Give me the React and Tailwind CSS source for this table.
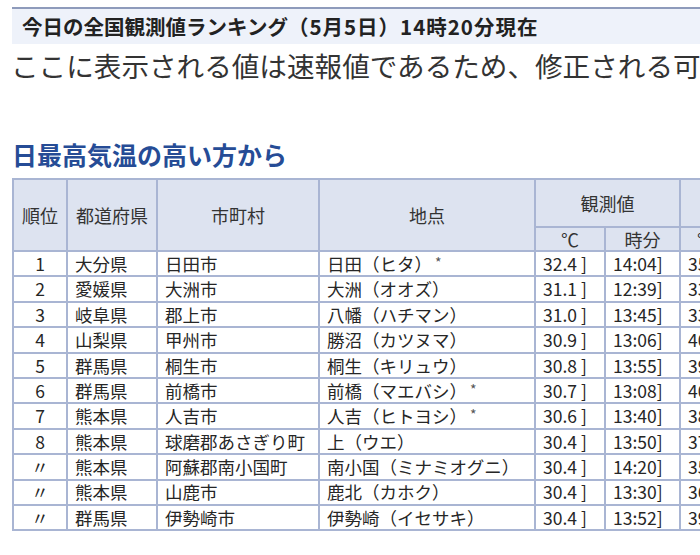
const rows = [
  { rank: '1', pref: '大分県', city: '日田市', point: '日田（ヒタ）', star: true, temp: '32.4 ]', time: '14:04]', rec: '35.2' },
  { rank: '2', pref: '愛媛県', city: '大洲市', point: '大洲（オオズ）', temp: '31.1 ]', time: '12:39]', rec: '33.6' },
  { rank: '3', pref: '岐阜県', city: '郡上市', point: '八幡（ハチマン）', temp: '31.0 ]', time: '13:45]', rec: '33.0' },
  { rank: '4', pref: '山梨県', city: '甲州市', point: '勝沼（カツヌマ）', temp: '30.9 ]', time: '13:06]', rec: '40.5' },
  { rank: '5', pref: '群馬県', city: '桐生市', point: '桐生（キリュウ）', temp: '30.8 ]', time: '13:55]', rec: '39.8' },
  { rank: '6', pref: '群馬県', city: '前橋市', point: '前橋（マエバシ）', star: true, temp: '30.7 ]', time: '13:08]', rec: '40.0' },
  { rank: '7', pref: '熊本県', city: '人吉市', point: '人吉（ヒトヨシ）', star: true, temp: '30.6 ]', time: '13:40]', rec: '38.4' },
  { rank: '8', pref: '熊本県', city: '球磨郡あさぎり町', point: '上（ウエ）', temp: '30.4 ]', time: '13:50]', rec: '37.5' },
  { rank: '〃', pref: '熊本県', city: '阿蘇郡南小国町', point: '南小国（ミナミオグニ）', temp: '30.4 ]', time: '14:20]', rec: '35.1' },
  { rank: '〃', pref: '熊本県', city: '山鹿市', point: '鹿北（カホク）', temp: '30.4 ]', time: '13:30]', rec: '36.9' },
  { rank: '〃', pref: '群馬県', city: '伊勢崎市', point: '伊勢崎（イセサキ）', temp: '30.4 ]', time: '13:52]', rec: '39.6' },
];

const th = 'border-2 border-[#a9b5d3] bg-[#dde3f0] font-normal text-[18px] text-[#333]';
const td = 'border-2 border-[#a9b5d3] px-[7px] text-[17.5px] text-[#262626] leading-none whitespace-nowrap';

export default function App() {
  return (
    <div
      className="w-[700px] h-[555px] overflow-hidden bg-white pt-[7px] pl-[12px]"
      style={{ fontFamily: '"Noto Sans CJK JP", "Noto Sans", sans-serif' }}
    >
      <div className="w-[1000px] border-t-2 border-[#8e9bbb] bg-[#eef2fa] h-[37px] flex items-center pl-[10px]">
        <h2 className="text-[20.5px] font-bold text-[#222] whitespace-nowrap">
          今日の全国観測値ランキング
          <span className="tracking-[1px]">（5月5日）14時20分現在</span>
        </h2>
      </div>
      <p className="text-[27.6px] leading-[36px] text-[#333] whitespace-nowrap mt-[3px] -ml-[1px]">
        ここに表示される値は速報値であるため、修正される可能性があります。
      </p>

      <h3 className="mt-[54px] text-[25px] leading-[34px] font-bold text-[#264c96] whitespace-nowrap">
        日最高気温の高い方から
      </h3>

      <table className="mt-[7px] table-fixed border-collapse border-2 border-[#a9b5d3] w-[840px]">
        <colgroup>
          <col className="w-[54px]" />
          <col className="w-[90px]" />
          <col className="w-[162px]" />
          <col className="w-[216px]" />
          <col className="w-[70px]" />
          <col className="w-[75px]" />
          <col className="w-[52px]" />
          <col className="w-[121px]" />
        </colgroup>
        <thead>
          <tr className="h-[48px]">
            <th rowSpan={2} className={th}>順位</th>
            <th rowSpan={2} className={th}>都道府県</th>
            <th rowSpan={2} className={th}>市町村</th>
            <th rowSpan={2} className={th}>地点</th>
            <th colSpan={2} className={th}>観測値</th>
            <th colSpan={2} className={th}>5月の1位の値</th>
          </tr>
          <tr className="h-[24px]">
            <th className={`${th} leading-none`}>℃</th>
            <th className={`${th} leading-none`}>時分</th>
            <th className={`${th} leading-none`}>℃</th>
            <th className={`${th} leading-none`}>年月日</th>
          </tr>
        </thead>
        <tbody>
          {rows.map((r, i) => (
            <tr key={i} className="h-[25.4px]">
              <td className={`${td} text-center`}>{r.rank}</td>
              <td className={td}>{r.pref}</td>
              <td className={td}>{r.city}</td>
              <td className={td}>
                {r.point}
                {r.star && <span className="text-[14px] align-top text-[#555] ml-[3px]">*</span>}
              </td>
              <td className={td}>{r.temp}</td>
              <td className={td}>{r.time}</td>
              <td className={td}>{r.rec}</td>
              <td className={td}>2019/5/26</td>
            </tr>
          ))}
        </tbody>
      </table>
    </div>
  );
}
